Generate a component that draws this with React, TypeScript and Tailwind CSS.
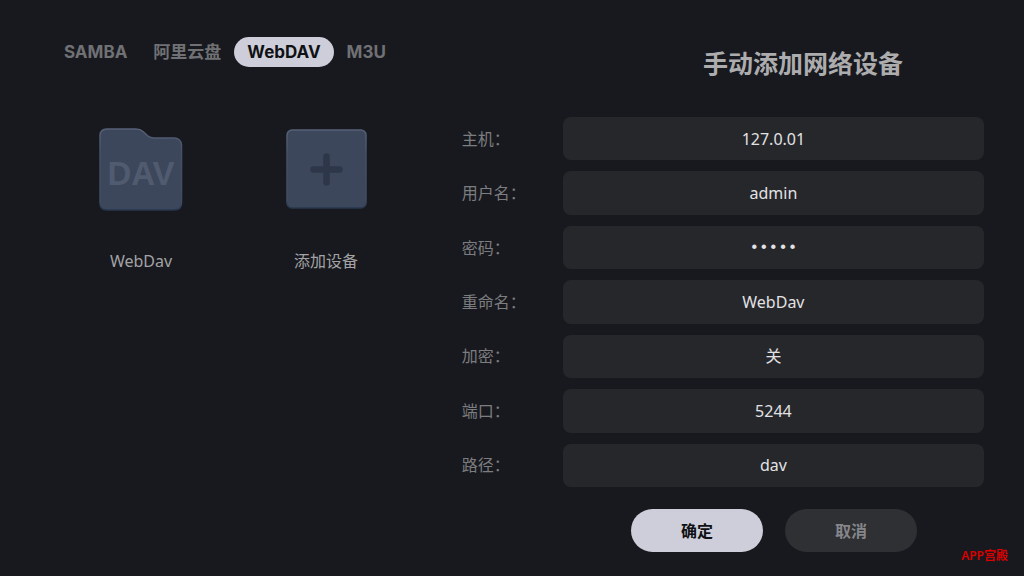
import { useState } from "react";

const tabs = ["SAMBA", "阿里云盘", "WebDAV", "M3U"];

const fields = [
    { id: "host", label: "主机：", value: "127.0.01", type: "text" },
    { id: "user", label: "用户名：", value: "admin", type: "text" },
    { id: "password", label: "密码：", value: "12345", type: "password" },
    { id: "name", label: "重命名：", value: "WebDav", type: "text" },
    { id: "secure", label: "加密：", value: "关", type: "select" },
    { id: "port", label: "端口：", value: "5244", type: "text" },
    { id: "path", label: "路径：", value: "dav", type: "text" },
];

function FolderIcon() {
    return <svg width="86" height="86" viewBox="0 0 86 86" aria-hidden="true">
        <defs>
            <linearGradient id="folderEdge" x1="0" y1="0" x2="0" y2="1">
                <stop offset="0" stopColor="#566077" />
                <stop offset="0.3" stopColor="#445066" />
                <stop offset="0.9" stopColor="#404c62" />
                <stop offset="1" stopColor="#26364d" />
            </linearGradient>
        </defs>
        <path
            d="M9 2H38C41 2 43 2.700 45 4.500L50 9C52 10.700 53.500 11 56 11H76C80.500 11 83.500 14 83.500 18V76C83.500 80.500 80.500 83 76 83H9C4.500 83 2 80.500 2 76V9C2 4.500 4.500 2 9 2Z"
            fill="#3c475b"
            stroke="url(#folderEdge)"
            strokeWidth="1.500"
        />
        <text x="43" y="58" textAnchor="middle" fill="#505b70" className="font-['Liberation_Sans',sans-serif] text-[33px] font-bold">DAV</text>
    </svg>
}

function AddIcon() {
    return <svg width="86" height="86" viewBox="0 0 86 86" aria-hidden="true">
        <defs>
            <linearGradient id="addEdge" x1="0" y1="0" x2="0" y2="1">
                <stop offset="0" stopColor="#566077" />
                <stop offset="0.3" stopColor="#445066" />
                <stop offset="0.9" stopColor="#404c62" />
                <stop offset="1" stopColor="#26364d" />
            </linearGradient>
        </defs>
        <rect x="4" y="3" width="79" height="78" rx="5" fill="#3c475b" stroke="url(#addEdge)" strokeWidth="1.500" />
        <path d="M43.500 29.500V55.500M30.500 42.500H56.500" stroke="#2d3749" strokeWidth="6.500" strokeLinecap="round" />
    </svg>
}

export default function App() {
    const [tab, setTab] = useState("WebDAV");
    const [form, setForm] = useState<Record<string, string>>(
        Object.fromEntries(fields.map(f => [f.id, f.value]))
    );

    const inputStyle = "h-full min-w-0 flex-1 appearance-none rounded-lg bg-[#26272b] text-center text-base text-[#e2e2e4] outline-none";

    return <div className="relative flex min-h-screen bg-[#18191e] font-['Noto_Sans','Noto_Sans_CJK_SC',sans-serif]">
        <div className="w-[45%] shrink-0 pt-[37px] pl-[51px]">
            <nav className="flex font-['Inter','Noto_Sans_CJK_SC',sans-serif]">
                {tabs.map(t => <button
                    key={t}
                    onClick={() => setTab(t)}
                    className={t === tab
                        ? "h-[30px] rounded-full bg-[#cdced9] px-[13px] text-[17px] leading-[30px] font-bold text-[#101114]"
                        : "h-[30px] rounded-full px-[13px] text-[17px] leading-[30px] font-bold text-[#707175]"}
                >{t}</button>)}
            </nav>
            <div className="mt-[60px] ml-[47px] flex gap-[99px]">
                <button className="flex w-[86px] flex-col items-center gap-9 text-base text-[#a3a3a5]">
                    <FolderIcon />
                    <span className="leading-6">WebDav</span>
                </button>
                <button className="flex w-[86px] flex-col items-center gap-9 text-base text-[#a3a3a5]">
                    <AddIcon />
                    <span className="leading-6">添加设备</span>
                </button>
            </div>
        </div>

        <form className="flex-1 pt-[43px] pr-10 pl-px" onSubmit={e => e.preventDefault()}>
            <h1 className="pl-40 text-center text-[25px] leading-10 font-bold text-[#acacae]">手动添加网络设备</h1>
            <div className="mt-[34px] grid h-[370px] grid-rows-7 gap-[11px]">
                {fields.map(f => <div key={f.id} className="flex items-center">
                    <label htmlFor={f.id} className="w-[101px] text-base text-[#7c7d80]">{f.label}</label>
                    {f.type === "select"
                        ? <select
                            id={f.id}
                            value={form[f.id]}
                            onChange={e => setForm({ ...form, [f.id]: e.target.value })}
                            className={inputStyle}
                        >
                            <option>关</option>
                            <option>开</option>
                        </select>
                        : <input
                            id={f.id}
                            type={f.type}
                            value={form[f.id]}
                            onChange={e => setForm({ ...form, [f.id]: e.target.value })}
                            className={f.type === "password" ? inputStyle + " font-['Liberation_Mono',monospace]" : inputStyle}
                        />}
                </div>)}
            </div>
            <div className="mt-[22px] flex justify-center gap-[22px] pl-[102px]">
                <button type="submit" className="h-[43px] w-[132px] rounded-full bg-[#cdced9] text-base font-bold text-[#101114]">确定</button>
                <button type="button" className="h-[43px] w-[132px] rounded-full bg-[#2f3034] text-base font-bold text-[#85868a]">取消</button>
            </div>
        </form>

        <span className="absolute right-4 bottom-3 text-xs leading-4 font-semibold text-[#d80000]">APP宫殿</span>
    </div>
}
